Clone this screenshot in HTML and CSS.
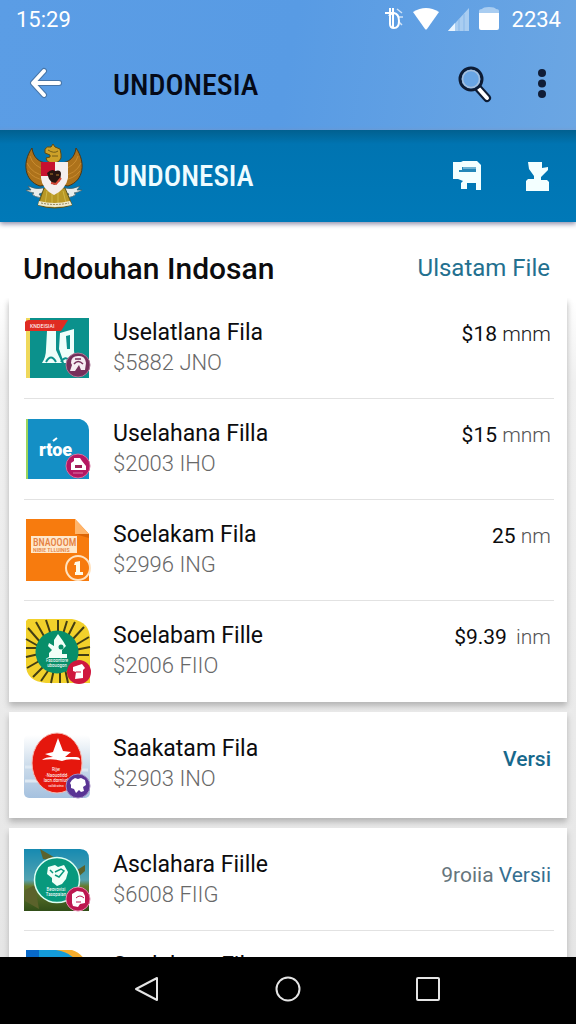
FILE: index.html
```html
<!DOCTYPE html>
<html lang="id">
<head>
<meta charset="utf-8">
<meta name="viewport" content="width=device-width, initial-scale=1">
<title>Undonesia</title>
<link rel="stylesheet" href="styles.css">
</head>
<body>
<div class="screen">
  <header class="top">
    <div class="status">
      <span>15:29</span>
      <div class="status-right">
        <svg width="20" height="26" viewBox="0 0 20 26" fill="none" stroke="#fff" stroke-width="2"><path d="M6 2v16q0 4 4 4 5 0 5-7t-5-8q-3 0-5 3M1 7h8M9 2v20"/><path d="M13 3l5 4M15 11h4M15 16l3 3" stroke-width="1.500" opacity=".7"/></svg>
        <svg width="28" height="24" viewBox="0 0 28 24"><path d="M1 5Q14-3 27 5L15 22q-1 1-2 0z" fill="#fff"/></svg>
        <svg width="22" height="24" viewBox="0 0 22 24"><path d="M0 24 21 1V24z" fill="#a9cdf1"/><path d="M0 24 7 16V24z" fill="#eaf5ff"/><path d="M11 12v12M16 7v17" stroke="#87b7e9"/></svg>
        <svg width="22" height="24" viewBox="0 0 22 24"><path d="M1 4Q1 2 4 2Q5 0 11 0t7 2q3 0 3 2v4H1z" fill="#a9cdf1"/><path d="M1 6h20v15q0 2-2 2H3q-2 0-2-2z" fill="#fff"/></svg>
        <span class="status-count">2234</span>
      </div>
    </div>
    <div class="appbar">
      <button class="icon-btn back" aria-label="Kembali"><svg width="34" height="34" viewBox="0 0 34 34" fill="none" stroke-linecap="round" stroke-linejoin="round"><path d="M15 4 4 16 15 28M5 16H30" stroke="#4775a8" stroke-width="6"/><path d="M15 4 4 16 15 28M5 16H30" stroke="#fff" stroke-width="4"/></svg></button>
      <h1 class="bar-title">UNDONESIA</h1>
      <button class="icon-btn" aria-label="Cari"><svg width="36" height="38" viewBox="0 0 36 38"><path d="M21 23 30 33" stroke="#0d1c35" stroke-width="8" stroke-linecap="round"/><path d="M22 24 30 33" stroke="#fff" stroke-width="4" stroke-linecap="round"/><circle cx="14" cy="14" r="11" fill="#69a5e4" stroke="#0d1c35" stroke-width="3"/><circle cx="14" cy="14" r="8.500" fill="none" stroke="#a6bfdc" stroke-width="1.500"/></svg></button>
      <button class="icon-btn more" aria-label="Menu"><svg width="10" height="30" viewBox="0 0 10 30" fill="#101d37"><circle cx="5" cy="4" r="4"/><circle cx="5" cy="14.500" r="4"/><circle cx="5" cy="25" r="4"/></svg></button>
    </div>
  </header>

  <section class="brand">
    <svg class="emblem" width="62" height="66" viewBox="0 0 62 66">
      <path d="M9 5C-1 19 1 38 17 43L25 42V20C16 20 10 14 9 5zM53 5C63 19 61 38 45 43L37 42V20C46 20 52 14 53 5z" fill="#ad721b" stroke="#503713" stroke-width="1"/>
      <path d="M7 13q3 11 17 14M4 20q5 11 19 13M5 28q6 8 17 9M55 13q-3 11-17 14M58 20q-5 11-19 13M57 28q-6 8-17 9" fill="none" stroke="#c98c30"/>
      <path d="M22 6q2-3 6-2l2-3 2 3 5 2 1 5v4q-2 5-8 5-6 0-7-5l4-1v-2l-5-2z" fill="#cda128" stroke="#60480f"/>
      <path d="M25 7q6 4 10 1M29 13h6" fill="none" stroke="#735d18"/>
      <path d="M5 43q8 4 15 2l4 3-8 3 3 4q-8-1-10-4l2-1q-6-1-8-3h5zM57 43q-8 4-15 2l-4 3 8 3-3 4q8-1 10-4l-2-1q6-1 8-3h-5z" fill="#e8eceb" stroke="#405b63" stroke-width=".7"/>
      <path d="M21 45h21l7 17q-18 6-34 0z" fill="#b89725" stroke="#5e551e"/>
      <path d="M24 48l-2 13M29 49v13M35 49v13M40 48l3 12" stroke="#d0b846" stroke-width="1"/>
      <path d="M16 58q15 4 31 0l2 4q-17 4-34 0z" fill="#efead0"/><path d="M18 60q14 3 28 0" fill="none" stroke="#91855c" stroke-dasharray="2 1"/>
      <path d="M18 19H45V35Q43 46 31 52Q19 46 18 35z" fill="#f4eeee"/>
      <path d="M18 19H32V33H18z" fill="#c7112f"/>
      <path d="M24 30q5-5 8-2 6-2 6 3l-1 7-6 4-5-6z" fill="#281511"/><path d="M28 40l5 1 5-6" fill="none" stroke="#d64938" stroke-width="2"/><path d="M27 31h3M33 32h3" stroke="#b37a2e" stroke-width="1"/>
    </svg>
    <h2 class="bar-title">UNDONESIA</h2>
    <button class="icon-btn" aria-label="Kendaraan"><svg width="30" height="30" viewBox="0 0 30 30"><path d="M1 1H9L11 0H25L29 4V29H24V22H15V28H9V22L11 20L6 18H1z" fill="#f3ffff"/><path d="M10 6H24V11H7V9H10z" fill="#2487b8"/><path d="M11 7H24" stroke="#b9dfef"/></svg></button>
    <button class="icon-btn save" aria-label="Unduh"><svg width="24" height="30" viewBox="0 0 24 30"><path d="M3 1H17V7L23 6V9L16 16V19H22L24 21V30H1V20L3 18H9V15L4 8z" fill="#f3ffff"/></svg></button>
  </section>

  <main class="content">
    <div class="section-head">
      <h3>Undouhan Indosan</h3>
      <a class="all" href="#">Ulsatam File</a>
    </div>

    <ul class="card">
      <li class="row">
        <svg class="thumb" viewBox="0 0 68 68"><path d="M2 2H65V62H2z" fill="#0b918c"/><path d="M2 2H6V62H2z" fill="#efd85b"/><path d="M23 15H32V34L38 47H18q4-6 4-14zM36 17L50 13V35L52 47H40l-5-14z" fill="#effefa"/><path d="M42 20l4-1v14h-3z" fill="#0b918c"/><path d="M22 46q5-9 10 0M37 46q4-7 9-1" fill="none" stroke="#0b918c" stroke-width="2"/><path d="M1 6q1-2 4-2H44L37 15H1z" fill="#df2c22"/><text class="micro" x="6" y="12" font-size="6">KNDEISIAI</text><circle cx="54" cy="49" r="12" fill="#76305b" stroke="#ab7998"/><path d="M47 47q0-7 7-7 7-1 8 7l-1 7h-4l-2-5-4 6h-5l2-6z" fill="#f6edf3"/><path d="M50 48q4-5 9 0M51 43h6" fill="none" stroke="#76305b" stroke-width="1.500"/></svg>
        <div class="info"><span class="name">Uselatlana Fila</span><span class="sub">$5882 JNO</span></div>
        <span class="value">$18 <span class="unit dark">mnm</span></span>
      </li>
      <li class="row">
        <svg class="thumb" viewBox="0 0 68 68"><path d="M2 2H56Q65 5 65 13V62H2z" fill="#148fc5"/><path d="M2 2H4V62H2z" fill="#9bd65c"/><text class="logo" x="15" y="39" font-size="18">rtoe</text><path d="M29 24l4-3" stroke="#fff" stroke-width="2"/><circle cx="54" cy="49" r="12" fill="#b51762" stroke="#d5729f"/><path d="M47 53V46L50 44V41h6l2 3 4 5v4z" fill="#fff"/><path d="M51 48h7v3h-7z" fill="#9e2158"/><path d="M49 56h10" stroke="#dc78a7"/></svg>
        <div class="info"><span class="name">Uselahana Filla</span><span class="sub">$2003 IHO</span></div>
        <span class="value">$15 <span class="unit">mnm</span></span>
      </li>
      <li class="row">
        <svg class="thumb" viewBox="0 0 68 68"><path d="M2 1H51L65 16V63H2z" fill="#f77b0e"/><path d="M51 1L65 16H51z" fill="#ffb56b"/><path d="M51 16H65V20z" fill="#dc6504"/><path d="M7 18H53V35H7z" fill="#ffe8cb"/><text class="stamp" x="9" y="28" font-size="10">BNAOOOM</text><text class="stamp" x="9" y="34" font-size="6">NIBIE TLLUINIS</text><circle cx="54" cy="50" r="12" fill="#f77b0e" stroke="#ffe2bf" stroke-width="2"/><path d="M51 44l5-1v11h3v3h-8v-3h1v-7h-2z" fill="#fffbe9"/></svg>
        <div class="info"><span class="name">Soelakam Fila</span><span class="sub">$2996 ING</span></div>
        <span class="value">25 <span class="unit">nm</span></span>
      </li>
      <li class="row">
        <svg class="thumb" viewBox="0 0 68 68"><path d="M4 0H48Q66 3 66 20V64H22Q2 62 2 46V2z" fill="#f2d12b"/><g stroke="#433e14" stroke-width="2"><path d="M34 1V14M22 1l5 15M43 2l-4 13M12 3l9 16M51 3l-7 14M4 9l13 15M60 8L48 21M2 20l14 8M65 18l-15 9M2 29h13M66 28l-15 3M2 38l13-3M65 36H52M3 49l14-8M9 58l12-12M17 62l9-13M27 64l3-14M36 64V51M44 64l-3-14"/></g><circle cx="33" cy="33" r="21.500" fill="#088e69"/><path d="M25 38V34l3-3-4-4 1-3 5 3V21l4-6 5 7 3 5-4 4v4h5v4H23z" fill="#f2fff7"/><circle cx="37" cy="28" r="2.500" fill="#088e69"/><text class="micro mid" x="33" y="43" font-size="5">Fasoontore</text><text class="micro mid" x="33" y="48" font-size="5">ubouogon</text><circle cx="55" cy="53" r="12" fill="#cf173e"/><path d="M49 48l9-3 3 4-2 2v8l-8 1 1-7-3-1z" fill="#fff"/><path d="M52 53h5" stroke="#cf173e"/></svg>
        <div class="info"><span class="name">Soelabam Fille</span><span class="sub">$2006 FIIO</span></div>
        <span class="value">$9.39 <span class="unit wide">inm</span></span>
      </li>
    </ul>

    <ul class="card spaced">
      <li class="row">
        <svg class="thumb" viewBox="0 0 68 68"><defs><linearGradient id="haze" x2="0" y2="1"><stop offset="0" stop-color="#fff"/><stop offset=".5" stop-color="#cbdbea"/><stop offset="1" stop-color="#a5c1df"/></linearGradient></defs><rect y="3" width="66" height="63" rx="5" fill="url(#haze)"/><path d="M1 35h17M1 49h22M44 38h20" stroke="#dde8f2" stroke-width="3"/><ellipse cx="33" cy="31" rx="25" ry="30" fill="#e5170d" stroke="#f7bab3"/><path d="M21 22l8-2 5-14 5 13 8 1-6 5h11q4 0 4 3-12-2-18 1-9-3-20-1 3-3 11-3z" fill="#fff"/><text class="micro mid" x="32" y="39" font-size="5">Rijw</text><text class="micro mid" x="33" y="45" font-size="5">·Naouotidd·</text><text class="micro mid" x="32" y="50" font-size="5">lacn.dorniud</text><text class="micro mid" x="32" y="55" font-size="4">validratno</text><circle cx="54" cy="54" r="12" fill="#593494" stroke="#a18bc1"/><path d="M48 48l3-2 3 1 3-1 4 2 1 5-3 2 1 4-3 1-2-2-3 3-2-4-3-1v-3l-1-2z" fill="#fff"/></svg>
        <div class="info"><span class="name">Saakatam Fila</span><span class="sub">$2903 INO</span></div>
        <a class="value link" href="#">Versi</a>
      </li>
    </ul>

    <ul class="card spaced">
      <li class="row">
        <svg class="thumb" viewBox="0 0 68 68"><defs><linearGradient id="field" x2="0" y2="1"><stop offset="0" stop-color="#168ab1"/><stop offset=".5" stop-color="#54a3b1"/><stop offset=".6" stop-color="#667b2f"/><stop offset="1" stop-color="#314e18"/></linearGradient></defs><path d="M0 1H56q9 0 9 10V63H0z" fill="url(#field)"/><path d="M16 1l12 7 8 5-17-2zM50 24l11-7v6l-9 8zM1 42l10-5 4 24-14-8z" fill="#5b622b"/><circle cx="33" cy="32" r="22.500" fill="#08997d" stroke="#dcfff4" stroke-width="1.500"/><path d="M24 19l7-2 3 2 6-2 4 7-2 7-4 5-5 2-5-4v-4l-5-4z" fill="#f0fff8"/><path d="M31 24l6-3 3 2-5 6-4-2M26 22l3 3" fill="none" stroke="#08997d" stroke-width="1.500"/><text class="micro mid" x="32" y="43" font-size="5">Beovovisi</text><text class="micro mid" x="32" y="48" font-size="5">Tasopaian</text><circle cx="54" cy="51" r="12" fill="#bd174f" stroke="#e28cae"/><path d="M48 55v-9l5-3 6 1 2 4v7l-5 1-2 3-5-1z" fill="#fff"/><path d="M52 50q4-4 8 0M52 54h5" fill="none" stroke="#bd174f"/></svg>
        <div class="info"><span class="name">Asclahara Fiille</span><span class="sub">$6008 FIIG</span></div>
        <a class="value link soft" href="#"><span class="muted">9roiia</span> Versii</a>
      </li>
      <li class="row">
        <svg class="thumb" viewBox="0 0 68 68"><path d="M2 1H48Q60 5 64 18V62H2z" fill="#f5ad2e"/><path d="M2 1H32Q48 3 55 16V62H2z" fill="#149bd8"/><path d="M2 1H15V62H2z" fill="#0869c9"/></svg>
        <div class="info"><span class="name">Soelaham Fila</span></div>
      </li>
    </ul>
  </main>

  <nav class="navbar">
    <button class="icon-btn" aria-label="Kembali"><svg width="28" height="28" viewBox="0 0 28 28"><path d="M2 14 23 3V25z" fill="none" stroke="#e4e4e4" stroke-width="2" stroke-linejoin="round"/></svg></button>
    <button class="icon-btn" aria-label="Beranda"><svg width="28" height="28" viewBox="0 0 28 28"><circle cx="14" cy="14" r="11.500" fill="none" stroke="#e4e4e4" stroke-width="2"/></svg></button>
    <button class="icon-btn" aria-label="Ikhtisar"><svg width="28" height="28" viewBox="0 0 28 28"><rect x="3" y="3" width="22" height="22" rx="1" fill="none" stroke="#e4e4e4" stroke-width="2"/></svg></button>
  </nav>
</div>
</body>
</html>
```
FILE: styles.css
```css
* { box-sizing: border-box; }

body {
  margin: 0;
  font-family: Roboto, "Liberation Sans", sans-serif;
  color: #0c0c0e;
}

h1, h2, h3, ul { margin: 0; padding: 0; }
a { text-decoration: none; }
svg { display: block; flex: none; }

.screen {
  display: flex;
  flex-direction: column;
  height: 100vh;
  overflow: hidden;
}

.icon-btn {
  display: grid;
  place-items: center;
  padding: 0;
  border: 0;
  background: none;
}

.top {
  flex: none;
  background: linear-gradient(100deg, #5b9de5, #589be4 50%, #6ba6e3);
}

.status {
  display: flex;
  justify-content: space-between;
  align-items: center;
  height: 38px;
  padding: 0 15px 0 16px;
  color: #fff;
  font-size: 22px;
}

.status-right {
  display: flex;
  align-items: center;
  gap: 8px;
}
.status-count { margin-left: 4px; }

.appbar, .brand {
  display: flex;
  align-items: center;
  height: 92px;
  padding: 0 27px 0 29px;
}

.back { width: 34px; margin-right: 50px; }
.more { width: 14px; margin-left: 42px; }
.save { margin-left: 43px; }

.bar-title {
  flex: 1;
  font-family: "Roboto Condensed", Roboto, sans-serif;
  font-size: 30px;
  font-weight: 500;
  color: #050a18;
}

.brand {
  flex: none;
  background: linear-gradient(#01608f, #0074b1 14px, #0079b8);
  box-shadow: 0 2px 5px #8c8ca8;
  position: relative;
  padding-left: 23px;
}
.brand .bar-title { color: #effcff; font-size: 29px; }
.emblem { margin-right: 28px; }

.content {
  flex: 1;
  min-height: 0;
  overflow: hidden;
  background: linear-gradient(#fff 78px, #f0f0f0 160px, #e6e6e6);
}

.section-head {
  display: flex;
  justify-content: space-between;
  align-items: center;
  height: 76px;
  padding: 16px 26px 0 23px;
}
.section-head h3 { font-size: 30px; font-weight: 500; }
.all { color: #23708f; font-size: 24px; }

.card {
  margin: 0 9px;
  padding: 0 13px 0 15px;
  list-style: none;
  background: #fff;
  box-shadow: 0 4px 6px #b4b4b4;
  clip-path: inset(0 -9px -10px -9px);
}
.spaced { margin-top: 10px; padding-top: 2px; padding-bottom: 3px; }

.row {
  display: flex;
  align-items: flex-start;
  padding: 18px 3px 14px 0;
  border-bottom: 1px solid #e2e2e2;
}
.row:last-child { border-bottom-color: transparent; }

.thumb { width: 68px; height: 68px; }
.info {
  display: flex;
  flex: 1;
  flex-direction: column;
  margin-left: 21px;
}
.name { font-size: 23px; line-height: 34px; }
.sub { color: #686868; font-size: 22px; font-weight: 300; line-height: 26px; }

.value { font-size: 21px; line-height: 37px; }
.unit { color: #555; font-weight: 300; }
.dark { color: #222; }
.wide { margin-left: 4px; }
.link { color: #17688c; font-weight: 500; line-height: 54px; }
.soft { color: #356f90; font-weight: 400; }
.muted { color: #66757c; }

.micro, .stamp { font-family: "Roboto Condensed", Roboto, sans-serif; }
.micro { fill: #fff; }
.mid { text-anchor: middle; }
.logo { fill: #fff; font-weight: 900; }
.stamp { fill: #e58244; font-weight: 500; }

.navbar {
  display: flex;
  flex: none;
  justify-content: center;
  align-items: center;
  gap: 112px;
  height: 67px;
  padding-bottom: 3px;
  background: #000;
}
```
